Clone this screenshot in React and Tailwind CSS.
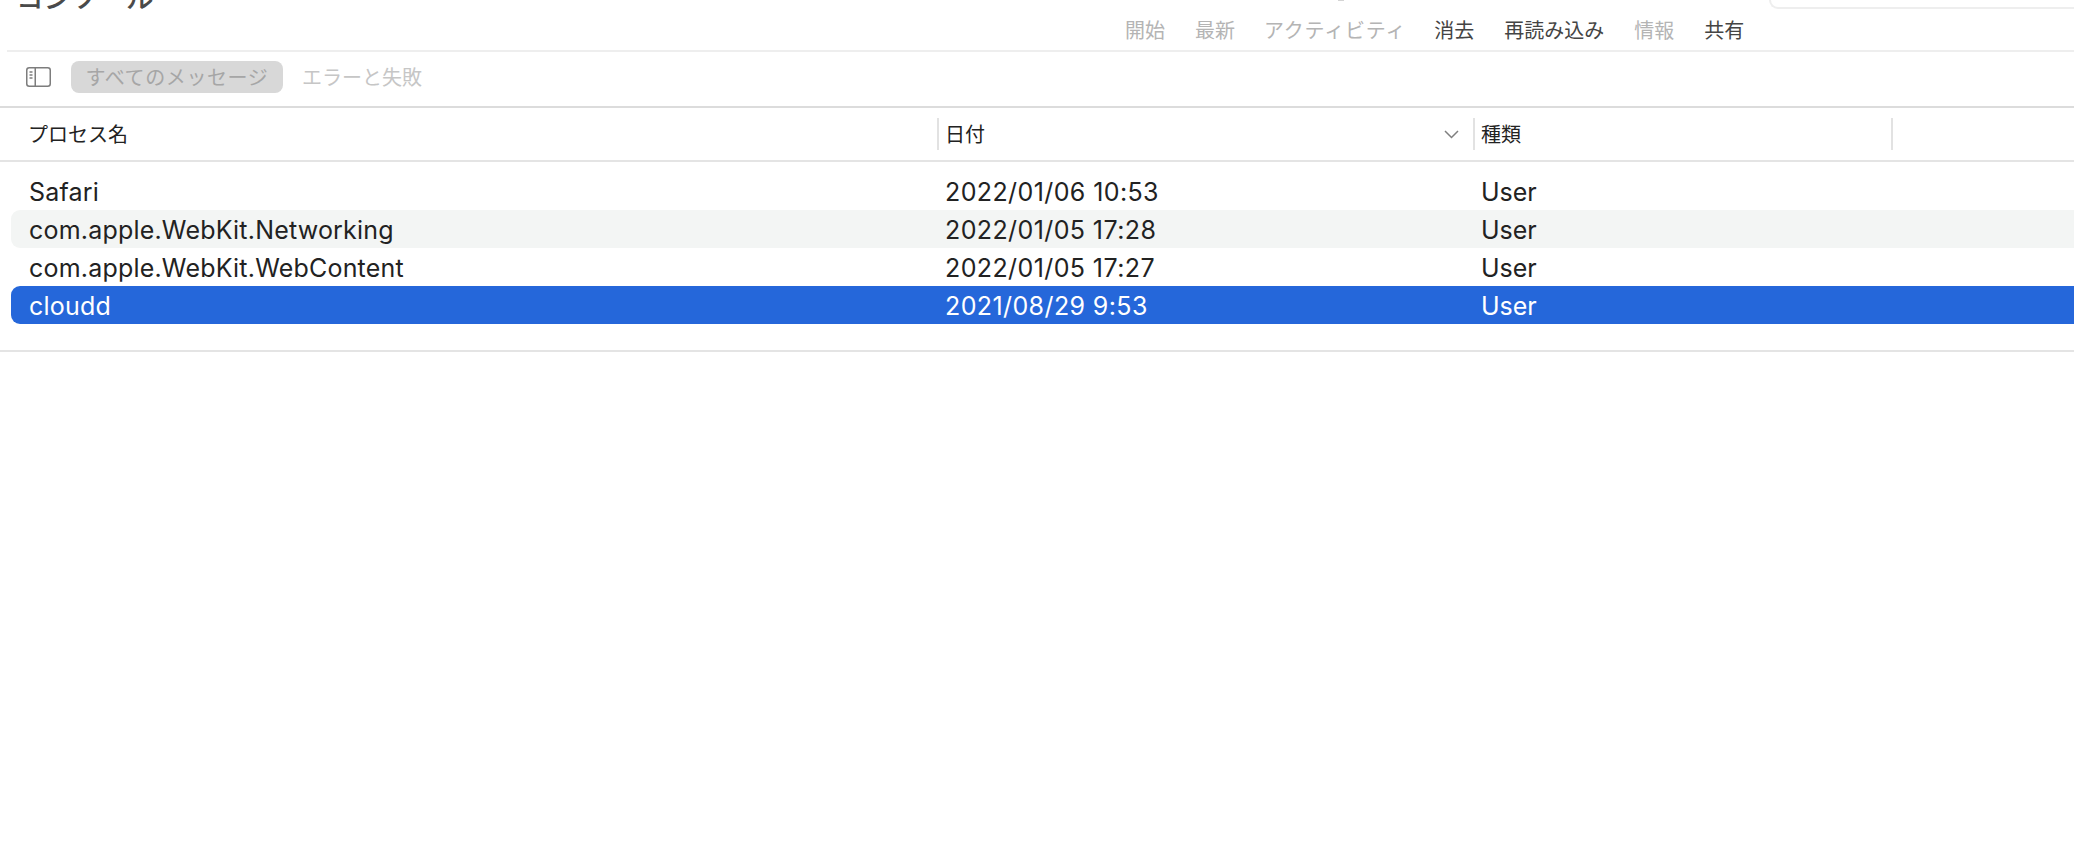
const rows = [
  ["Safari", "2022/01/06 10:53", "User", ""],
  ["com.apple.WebKit.Networking", "2022/01/05 17:28", "User", "bg-[#f3f5f4] text-[#222222]"],
  ["com.apple.WebKit.WebContent", "2022/01/05 17:27", "User", ""],
  ["cloudd", "2021/08/29 9:53", "User", "bg-[#2567da] text-white"],
];

function Action({ children, on, className = "" }) {
  return <span className={`${on ? "text-[#444444]" : "text-[#b4b4b4]"} ${className}`}>{children}</span>;
}

export default function App() {
  return (
    <div className="relative h-[842px] w-[2074px] overflow-hidden bg-white text-[#222222] font-['Inter','Noto_Sans_CJK_JP',sans-serif]">
      <div className="absolute left-[1338px] top-0 h-[1px] w-[6px] bg-[#d4d4d4]" />
      <div className="ml-[7px] flex h-[50px] items-start">
        <div className="-mt-[18px] ml-[9px] w-[1109px] text-[27.5px] leading-[28px] font-medium text-[#4a4a4a] font-['Noto_Sans_CJK_JP',sans-serif]">コンソール</div>
        <div className="mt-[18px] flex w-[644px] gap-[30px] text-[20px] leading-[24px] font-['Noto_Sans_CJK_JP',sans-serif]">
          <Action>開始</Action>
          <Action>最新</Action>
          <Action className="-ml-[1px] tracking-[0.8px]">アクティビティ</Action>
          <Action on className="-ml-[2px]">消去</Action>
          <Action on>再読み込み</Action>
          <Action>情報</Action>
          <Action on>共有</Action>
        </div>
        <div className="h-[9px] flex-1 rounded-bl-[12px] border-b-2 border-l-2 border-[#eeeeee]" />
      </div>
      <div className="ml-[7px] h-[2px] bg-[#eeeeee]" />
      <div className="flex h-[56px] items-center border-b-2 border-[#dcdcdc] pb-[4px] pl-[26px] font-['Noto_Sans_CJK_JP',sans-serif] text-[20px]">
        <svg width="25" height="20" viewBox="0 0 25 20" fill="none" className="text-[#7d7d7d]">
          <rect x="0.75" y="0.75" width="23.5" height="18.5" rx="2.5" stroke="currentColor" strokeWidth="1.5" />
          <path d="M9.25 1v18" stroke="currentColor" strokeWidth="1.5" />
          <path d="M3.5 5h3M3.5 8h3M3.5 11h3" stroke="currentColor" strokeWidth="1.4" />
        </svg>
        <div className="ml-[20px] flex h-[32px] w-[212px] items-center justify-center rounded-[8px] bg-[#d8d8d8] tracking-[0.6px] text-[#a6a6a6]">すべてのメッセージ</div>
        <div className="ml-[19px] text-[#c6c6c6]">エラーと失敗</div>
      </div>
      <div className="grid h-[54px] grid-cols-[937px_536px_418px_1fr] items-center border-b-2 border-[#e4e4e4] text-[20px] font-['Noto_Sans_CJK_JP',sans-serif]">
        <div className="pl-[28px]">プロセス名</div>
        <div className="flex h-[32px] items-center justify-between border-l-2 border-[#e2e2e2] pl-[6px] pr-[14px]">
          <span>日付</span>
          <svg width="15" height="9" viewBox="0 0 15 9" fill="none"><path d="M1 1l6.5 6.5L14 1" stroke="#7f7f7f" strokeWidth="1.5" /></svg>
        </div>
        <div className="flex h-[32px] items-center border-l-2 border-[#e2e2e2] pl-[6px]">種類</div>
        <div className="h-[32px] border-l-2 border-[#e2e2e2]" />
      </div>
      <div className="h-[190px] border-b-2 border-[#e4e4e4] pl-[11px] pt-[10px] text-[25px] leading-[40px]">
        {rows.map(([name, date, kind, cls]) => (
          <div key={name} className={`grid h-[38px] grid-cols-[926px_536px_1fr] rounded-l-[9px] ${cls}`}>
            <div className="pl-[18px] tracking-[0.2px]">{name}</div>
            <div className="pl-[8px] tracking-[0.4px]">{date}</div>
            <div className="pl-[8px]">{kind}</div>
          </div>
        ))}
      </div>
    </div>
  );
}
